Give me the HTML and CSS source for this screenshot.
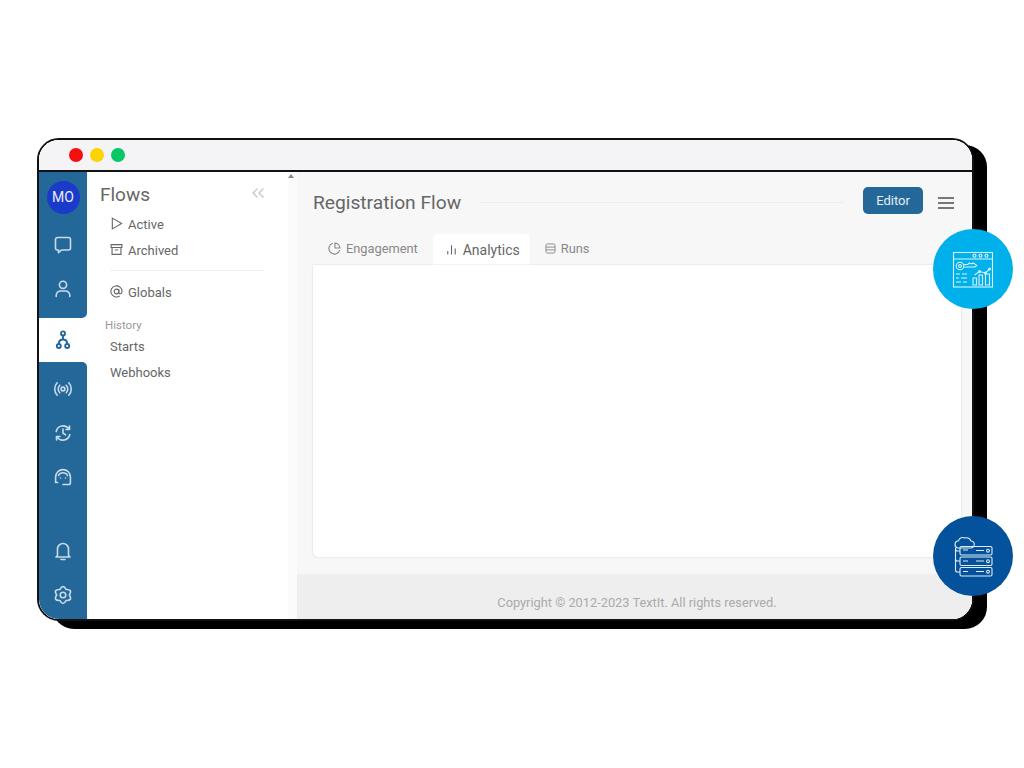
FILE: index.html
```html
<!DOCTYPE html>
<html lang="en">
<head>
<meta charset="utf-8">
<title>Registration Flow</title>
<link rel="stylesheet" href="styles.css">
</head>
<body>
<div class="window">
  <div class="clip">
    <header class="titlebar">
      <span class="dot red"></span><span class="dot yellow"></span><span class="dot green"></span>
    </header>
    <div class="app">
      <nav class="rail">
        <div class="rail-top">
          <div class="avatar">MO</div>
          <div class="rail-item"><svg class="ico" viewBox="0 0 20 20"><path d="M2.500 4.500a2 2 0 0 1 2-2h11a2 2 0 0 1 2 2v8.500a2 2 0 0 1-2 2H8.500l-3 2.700V15h-1a2 2 0 0 1-2-2z"/></svg></div>
          <div class="rail-item"><svg class="ico" viewBox="0 0 20 20"><circle cx="10" cy="5.800" r="3.600"/><path d="M3.200 17.500v-1.200a4.300 4.300 0 0 1 4.300-4.300h5a4.300 4.300 0 0 1 4.300 4.300v1.200"/></svg></div>
        </div>
        <div class="rail-item active"><svg class="ico flow" viewBox="0 0 20 20"><circle cx="10" cy="3.400" r="2"/><circle cx="5.800" cy="16" r="2"/><circle cx="14.200" cy="16" r="2"/><path d="M10 5.400v4.100M5.800 14c0-3 1.600-4.500 4.200-4.500s4.200 1.500 4.200 4.500"/></svg></div>
        <div class="rail-bottom">
          <div class="rail-item"><svg class="ico" viewBox="0 0 20 20"><circle cx="10" cy="10" r="1.900"/><path d="M6.800 6.200a5.300 5.300 0 0 0 0 7.600M13.200 6.200a5.300 5.300 0 0 1 0 7.600M4.200 3.800a9 9 0 0 0 0 12.400M15.800 3.800a9 9 0 0 1 0 12.400"/></svg></div>
          <div class="rail-item"><svg class="ico" viewBox="0 0 20 20"><path d="M3.200 8.500A7 7 0 0 1 16 6.200M16.800 11.500A7 7 0 0 1 4 13.800M16.500 3v3.500H13M3.500 17v-3.500H7M10 6v4.300l2.600 1.500"/></svg></div>
          <div class="rail-item"><svg class="ico" viewBox="0 0 20 20"><path d="M2.600 15.500V10a7.400 7.400 0 0 1 14.800 0v6a1.500 1.500 0 0 1-1.500 1.500H10M2.600 15.500h2M5.500 8.500a5 5 0 0 1 9 0M7.500 11h.01M12.500 11h.01"/></svg></div>
          <div class="rail-spacer"></div>
          <div class="rail-item"><svg class="ico" viewBox="0 0 20 20"><path d="M15.500 14.500V8a5.500 5.500 0 0 0-11 0v6.500L3 16h14zM8 18.500h4"/></svg></div>
          <div class="rail-item"><svg class="ico" viewBox="0 0 20 20"><circle cx="10" cy="10" r="2.800"/><path d="M6.850 4.540Q10-1.500 13.150 4.540 19.960 4.250 16.300 10 19.960 15.750 13.150 15.460 10 21.500 6.850 15.460.04 15.750 3.700 10 .04 4.250 6.850 4.540z"/></svg></div>
        </div>
      </nav>
      <aside class="panel">
        <div class="panel-head">
          <h2 class="panel-title">Flows</h2>
          <svg class="collapse" viewBox="0 0 14 12"><path d="M6.500 1.500 2 6l4.500 4.500M12.500 1.500 8 6l4.500 4.500"/></svg>
        </div>
        <div class="link first"><svg class="mini" viewBox="0 0 14 14"><path d="M2.500 1.200 12.500 7l-10 5.800z"/></svg>Active</div>
        <div class="link"><svg class="mini" viewBox="0 0 14 14"><path d="M1.200 1.800h11.600v3H1.200zM2.200 4.800v7.400h9.600V4.800M5.200 7.500h3.600"/></svg>Archived</div>
        <hr class="divider">
        <div class="link"><svg class="mini" viewBox="0 0 14 14"><circle cx="7" cy="7" r="2.500"/><path d="M9.500 4.500v3.400c0 2.300 3.500 2 3.500-.9a6 6 0 1 0-2.600 4.900"/></svg>Globals</div>
        <div class="group-label">History</div>
        <div class="plain">Starts</div>
        <div class="plain">Webhooks</div>
        <span class="scroll-arrow"></span>
      </aside>
      <main class="main">
        <div class="content">
          <div class="title-row">
            <h1 class="page-title">Registration Flow</h1>
            <span class="title-rule"></span>
            <button class="editor">Editor</button>
            <span class="burger"><i></i><i></i><i></i></span>
          </div>
          <div class="tabs">
            <div class="tab"><svg class="mini" viewBox="0 0 14 14"><path d="M12.700 8.800A6 6 0 1 1 5.200 1.300M7.500 1.200a5.500 5.500 0 0 1 5.300 5.300H7.500z"/></svg>Engagement</div>
            <div class="tab current"><svg class="mini" viewBox="0 0 14 14"><path d="M3 12.500V8.500M7 12.500V2.500M11 12.500V6"/></svg>Analytics</div>
            <div class="tab"><svg class="mini small" viewBox="0 0 14 14"><rect x="1.200" y="1.200" width="11.600" height="11.600" rx="2"/><path d="M1.200 5.200h11.600M1.200 8.800h11.600"/></svg>Runs</div>
          </div>
          <section class="card"></section>
        </div>
        <footer class="footer">Copyright © 2012-2023 TextIt. All rights reserved.</footer>
      </main>
    </div>
  </div>
  <div class="badge cyan">
    <svg viewBox="951 247 44 44" class="badge-art">
      <rect x="953.500" y="252.500" width="39" height="34.500"/>
      <path d="M953.500 259h39"/>
      <circle cx="974.500" cy="255.800" r="1.500"/><circle cx="980.500" cy="255.800" r="1.500"/><circle cx="986.500" cy="255.800" r="1.500"/>
      <circle cx="960" cy="266" r="3.800"/><circle cx="960" cy="266" r="1.400"/>
      <path d="M963.800 264.500h4l1.500-1.500 2 1 2-1 3.500 2.500-2 1.500h-10.500"/>
      <path d="M956 274h4M962 274h5M956 278h3M961 278h6M956 282h5M963 282h4"/>
      <path d="M973 278h3.500v7H973zM979 275h3.500v10H979zM985.500 274h4v11h-4z"/>
      <path d="M974.500 275l5-3.500 6 1.500 4-4"/>
      <circle cx="979.500" cy="271.500" r="1"/><circle cx="985.500" cy="273" r="1"/><circle cx="989.500" cy="269" r="1"/>
    </svg>
  </div>
  <div class="badge navy">
    <svg viewBox="951 534 44 44" class="badge-art">
      <path d="M957.500 548h13a3.500 3.500 0 0 0 .5-7 5 5 0 0 0-6-3 4.500 4.500 0 0 0-6.500 2.800 3.700 3.700 0 0 0-1 7.200z"/>
      <rect x="960" y="546.500" width="32" height="8.500" rx="1.500"/>
      <rect x="960" y="557" width="32" height="8.500" rx="1.500"/>
      <rect x="960" y="567.500" width="32" height="8.500" rx="1.500"/>
      <path d="M976 550.500h8M976 561h8M976 571.500h8M963 550h5M963 561h5M963 571.500h5"/>
      <circle cx="988" cy="550.700" r="1.400"/><circle cx="988" cy="561.200" r="1.400"/><circle cx="988" cy="571.700" r="1.400"/>
      <path d="M960 551h-2.500a2 2 0 0 1-2-2M960 561h-2.500a2 2 0 0 1-2-2v-11M960 572h-2.500a2 2 0 0 1-2-2v-11"/>
    </svg>
  </div>
</div>
</body>
</html>
```
FILE: styles.css
```css
* { box-sizing: border-box; }
html, body { margin: 0; height: 100%; }
html { background: #fff; }
body { padding: 138px 0 0 37px; font-family: Roboto, "Liberation Sans", sans-serif; color: #666; overflow: hidden; }

.window { position: relative; width: 937px; height: 483px; border: 2px solid #111; border-radius: 22px; background: #fff; }
.window::before { content: ""; position: absolute; left: 13px; top: 5px; width: 935px; height: 484px; background: #000; border-radius: 22px; z-index: -1; }
.clip { width: 100%; height: 100%; overflow: hidden; border-radius: 20px; display: flex; flex-direction: column; background: #fff; }

.titlebar { flex: 0 0 32px; display: flex; align-items: center; gap: 7px; padding: 0 0 0 30px; background: #f4f4f6; border-bottom: 2px solid #111; }
.dot { width: 14px; height: 14px; border-radius: 50%; }
.red { background: #f60f0f; }
.yellow { background: #fdd300; }
.green { background: #06c864; }

.app { flex: 1; display: flex; min-height: 0; }

.rail { flex: 0 0 48px; display: flex; flex-direction: column; background: #fff; }
.rail-top { height: 146px; padding-top: 9px; background: #24689a; border-bottom-right-radius: 5px; }
.rail-bottom { flex: 1; display: flex; flex-direction: column; padding: 5px 0 2px; background: #24689a; border-top-right-radius: 5px; }
.rail-spacer { flex: 1; }
.avatar { width: 33px; height: 33px; margin: 0 auto 9px; border-radius: 50%; background: #1a3bc9; color: #e8edf8; font-size: 14px; line-height: 33px; text-align: center; }
.rail-item { height: 44px; display: flex; align-items: center; justify-content: center; color: #c9dbe9; }
.rail-item.active { color: #24689a; }
.ico { width: 20px; height: 20px; fill: none; stroke: currentColor; stroke-width: 1.600; stroke-linecap: round; stroke-linejoin: round; }
.ico.flow { stroke-width: 1.900; }

.panel { position: relative; flex: 0 0 210px; padding: 10px 0 0 13px; background: #fff; border-right: 9px solid #fbfbfb; }
.panel-head { display: flex; align-items: center; width: 165px; justify-content: space-between; height: 24px; }
.panel-title { margin: 0; font-size: 19px; font-weight: 400; color: #666; }
.collapse { width: 14px; height: 12px; margin: -2px 0 0; fill: none; stroke: #ccc; stroke-width: 1.500; }
.link { display: flex; align-items: center; height: 26px; padding-left: 10px; font-size: 13px; color: #666; }
.link.first { margin-top: 5px; }
.mini { width: 13px; height: 13px; fill: none; stroke: currentColor; stroke-width: 1.200; flex: none; }
.mini.small { width: 11px; height: 11px; }
.link .mini { margin: -2px 5px 0 0; }
.divider { width: 154px; height: 1px; margin: 7px 0 8px 10px; border: 0; background: #eee; }
.group-label { margin: 13px 0 0 5px; height: 14px; font-size: 11.500px; line-height: 14px; color: #999; }
.plain { height: 26px; margin-left: 10px; font-size: 13px; line-height: 26px; color: #666; }
.group-label + .plain { margin-top: 2px; }
.scroll-arrow { position: absolute; right: -6px; top: 2px; border: 3px solid transparent; border-top: 0; border-bottom: 4px solid #888; }

.main { flex: 1; display: flex; flex-direction: column; background: #f7f7f8; min-width: 0; }
.content { flex: 1; display: flex; flex-direction: column; padding: 15px 11px 17px 16px; }
.title-row { display: flex; align-items: center; height: 27px; }
.page-title { margin: 4px 0 0; font-size: 19.200px; font-weight: 400; color: #666; white-space: nowrap; }
.title-rule { flex: 1; height: 1px; margin: 4px 20px 0 19px; background: #ececec; }
.editor { width: 60px; height: 27px; padding: 0; border: 0; border-radius: 5px; background: #24689a; color: #e6eef5; font: 13px Roboto, "Liberation Sans", sans-serif; }
.burger { display: flex; flex-direction: column; gap: 3px; width: 16px; margin: 4px 7px 0 15px; }
.burger i { display: block; height: 2px; background: #777; }

.tabs { display: flex; margin-top: 20px; height: 31px; }
.tab { display: flex; align-items: center; padding: 0 15px 2px 15px; font-size: 12.800px; color: #888; }
.tab.current { padding: 0 10px 0 12px; background: #fff; border-radius: 5px 5px 0 0; font-size: 14px; color: #666; }
.tab .mini { margin-right: 5px; }
.card { flex: 1; background: #fff; border-radius: 0 0 5px 5px; box-shadow: 0 0 2px rgba(0,0,0,.18); }

.footer { flex: 0 0 45px; padding: 21px 0 0 5px; background: #eee; font-size: 12.800px; line-height: 16px; text-align: center; color: #aaa; }

.badge { position: absolute; left: 894px; width: 80px; height: 80px; border-radius: 50%; display: flex; align-items: center; justify-content: center; }
.cyan { top: 89px; background: #00b0ea; color: #d9f4fd; }
.navy { top: 376px; background: #04529b; color: #e0ebf5; }
.badge-art { width: 44px; height: 44px; fill: none; stroke: currentColor; stroke-width: 1.100; }
```
